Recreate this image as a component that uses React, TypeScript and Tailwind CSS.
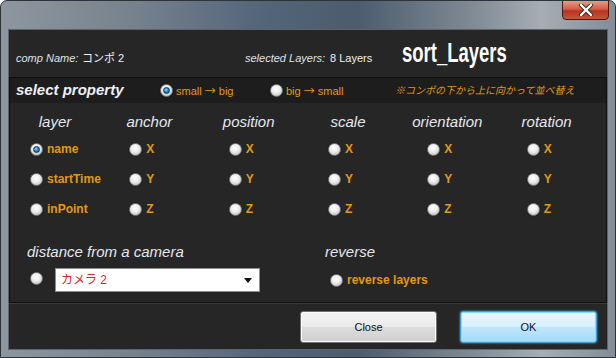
import type { ReactNode } from 'react';

const orange = 'text-[#e09a12]';

function Radio({ checked = false }: { checked?: boolean }) {
  return (
    <span className="relative inline-flex h-[13px] w-[13px] shrink-0 items-center justify-center rounded-full border border-[#7c7c7c] bg-[radial-gradient(circle_at_45%_35%,#ffffff_0%,#ececec_45%,#a9a9a9_100%)] shadow-[0_0_1px_#000]">
      {checked && (
        <span className="h-[7px] w-[7px] rounded-full border border-[#0c3552] bg-[radial-gradient(circle_at_40%_35%,#8fd8ff_0%,#2a8cd0_45%,#0d4a7a_100%)]" />
      )}
    </span>
  );
}

function Option({ label, checked }: { label: string; checked?: boolean }) {
  return (
    <div className="flex items-center gap-[4px]">
      <Radio checked={checked} />
      <span className={`text-[12px] font-bold leading-none ${orange}`}>{label}</span>
    </div>
  );
}

function Order({ from, to, checked }: { from: string; to: string; checked?: boolean }) {
  return (
    <div className="flex items-center gap-[3px]">
      <Radio checked={checked} />
      <span className={`text-[11px] leading-none ${orange}`}>
        {from} <span style={{ fontFamily: '"Noto Sans CJK JP", sans-serif' }}>→</span> {to}
      </span>
    </div>
  );
}

function Heading({ children, className = '' }: { children: ReactNode; className?: string }) {
  return <div className={`text-[15px] italic leading-[20px] text-[#e4e8ee] ${className}`}>{children}</div>;
}

const columns = [
  { title: 'layer', width: 'w-[90px]', items: ['name', 'startTime', 'inPoint'] },
  { title: 'anchor', width: 'w-[80px]', items: ['X', 'Y', 'Z'] },
  { title: 'position', width: 'w-[80px]', items: ['X', 'Y', 'Z'] },
  { title: 'scale', width: 'w-[80px]', items: ['X', 'Y', 'Z'] },
  { title: 'orientation', width: 'w-[80px]', items: ['X', 'Y', 'Z'] },
  { title: 'rotation', width: 'w-[80px]', items: ['X', 'Y', 'Z'] },
];

export default function App() {
  return (
    <div
      className="relative flex h-[358px] w-[616px] flex-col overflow-hidden rounded-t-[7px] border border-[#2e3338] bg-[linear-gradient(90deg,#8e979f_0%,#75818d_22%,#55657a_42%,#4c5c6c_58%,#7d8893_76%,#a6adb4_88%,#838d97_100%)]"
      style={{ fontFamily: '"Liberation Sans", "Noto Sans CJK JP", sans-serif' }}
    >
      {/* title bar */}
      <div className="relative h-[28px] shrink-0">
        <div className="absolute right-[6px] top-[-1px] flex h-[20px] w-[47px] items-center justify-center rounded-b-[4px] border border-[#4e1a12] bg-[linear-gradient(180deg,#e79a88_0%,#d0604a_45%,#b8331d_55%,#c8553c_100%)]">
          <svg width="16" height="12" viewBox="0 0 16 12">
            <path d="M3 1 L13 11 M13 1 L3 11" stroke="#3a2a28" strokeWidth="4.2" strokeLinecap="round" />
            <path d="M3 1 L13 11 M13 1 L3 11" stroke="#ffffff" strokeWidth="2.4" strokeLinecap="round" />
          </svg>
        </div>
      </div>

      {/* client area */}
      <div className="mx-[7px] flex h-[321px] shrink-0 flex-col border border-[#5b6570] bg-[#262626]">
        {/* header */}
        <div className="flex h-[47px] shrink-0 items-baseline pl-[7px] pt-[9px]">
          <span className="w-[66px] text-[11px] italic text-[#dfe3e8]">comp Name:</span>
          <span className="w-[163px] text-[11px] text-[#f2f2f2]">コンポ 2</span>
          <span className="w-[85px] text-[11px] italic text-[#dfe3e8]">selected Layers:</span>
          <span className="w-[72px] text-[11px] text-[#f2f2f2]">8 Layers</span>
          <span className="inline-block w-[105px] text-[28px] font-bold leading-[28px] text-white">
            <span className="inline-block origin-left scale-x-[0.66]">sort_Layers</span>
          </span>
        </div>

        {/* property panel */}
        <div className="flex h-[226px] shrink-0 flex-col border border-[#0f0f0f] shadow-[0_1px_0_#3a3a3a]">
          <div className="flex h-[25px] shrink-0 items-center bg-[#1d1d1d] pl-[6px]">
            <span className="w-[144px] text-[15px] font-bold italic text-[#eef1f5]">select property</span>
            <div className="w-[110px]">
              <Order from="small" to="big" checked />
            </div>
            <div className="w-[125px]">
              <Order from="big" to="small" />
            </div>
            <span className={`text-[10px] italic ${orange}`}>※コンポの下から上に向かって並べ替え</span>
          </div>

          <div className="flex pt-[9px]">
            {columns.map((c, ci) => (
              <div key={c.title} className="flex w-[100px] flex-col">
                <Heading className={`${c.width} text-center`}>{c.title}</Heading>
                <div className="mt-[2px] flex flex-col">
                  {c.items.map((it, i) => (
                    <div key={it} className="flex h-[30px] items-center pl-[20px]">
                      <Option label={it} checked={ci === 0 && i === 0} />
                    </div>
                  ))}
                </div>
              </div>
            ))}
          </div>

          <div className="mt-[18px] flex">
            <div className="w-[315px] pl-[17px]">
              <Heading>distance from a camera</Heading>
              <div className="mt-[6px] flex h-[24px] items-center">
                <div className="w-[28px] pl-[3px]">
                  <Radio />
                </div>
                <div className="flex h-[24px] w-[205px] items-center justify-between border border-[#8d8d8d] bg-white pl-[5px] pr-[7px]">
                  <span className="text-[12px] text-[#e8202a]">カメラ 2</span>
                  <svg width="8" height="5" viewBox="0 0 8 5">
                    <path d="M0 0 H8 L4 5 Z" fill="#111" />
                  </svg>
                </div>
              </div>
            </div>
            <div>
              <Heading>reverse</Heading>
              <div className="mt-[6px] flex h-[24px] items-center pl-[5px]">
                <Option label="reverse layers" />
              </div>
            </div>
          </div>
        </div>

        {/* buttons */}
        <div className="flex flex-1 items-start justify-end gap-[23px] pr-[10px] pt-[8px]">
          <button className="h-[32px] w-[137px] rounded-[3px] border border-[#707070] bg-[linear-gradient(180deg,#f3f3f3_0%,#ebebeb_48%,#dcdcdc_52%,#d0d0d0_100%)] text-[11px] text-[#111] shadow-[inset_0_0_0_1px_#fcfcfc]">
            Close
          </button>
          <button className="h-[32px] w-[137px] rounded-[3px] border border-[#3c9fd8] bg-[linear-gradient(180deg,#eaf6fd_0%,#d9f0fc_48%,#bee6fd_52%,#a7d9f5_100%)] text-[11px] text-[#111] shadow-[inset_0_0_0_1px_#7fdcff,0_0_2px_#5fc8ff]">
            OK
          </button>
        </div>
      </div>
    </div>
  );
}
